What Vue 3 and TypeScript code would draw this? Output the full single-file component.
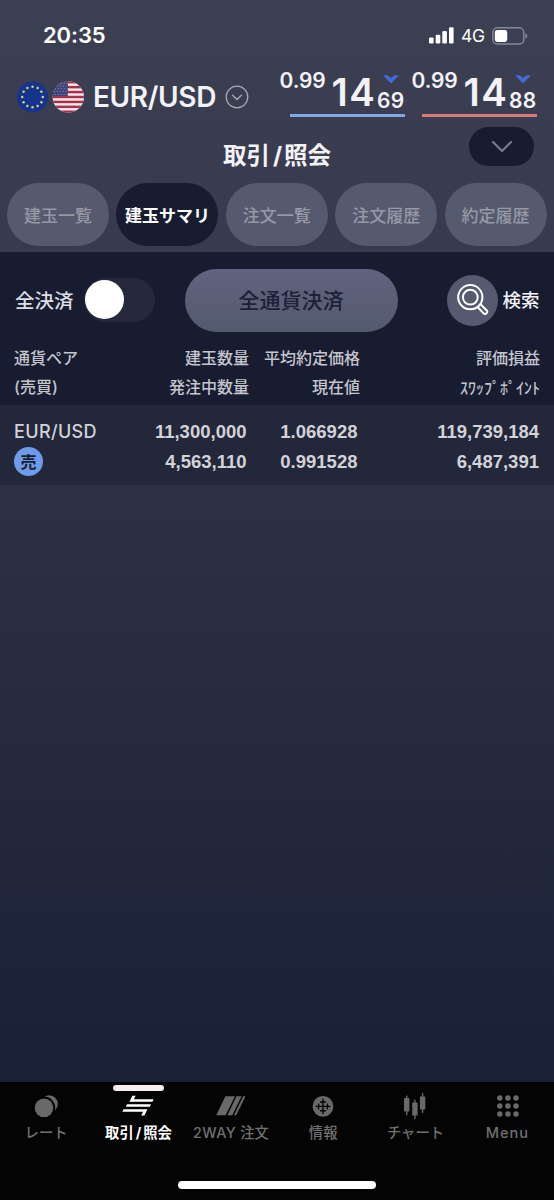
<script setup lang="ts">
interface Price { head: string; main: string; tail: string; side: 'bid' | 'ask' }

const prices: Price[] = [
  { head: '0.99', main: '14', tail: '69', side: 'bid' },
  { head: '0.99', main: '14', tail: '88', side: 'ask' },
]
const tabs: string[] = ['建玉一覧', '建玉サマリ', '注文一覧', '注文履歴', '約定履歴']
const activeTab = 1
const nav: { id: string; label: string }[] = [
  { id: 'rate', label: 'レート' },
  { id: 'trade', label: '取引/照会' },
  { id: 'twoway', label: '2WAY注文' },
  { id: 'info', label: '情報' },
  { id: 'chart', label: 'チャート' },
  { id: 'menu', label: 'Menu' },
]
const stars = Array.from({ length: 12 }, (_, i) => ({
  x: 16 + 10.3 * Math.sin((i * Math.PI) / 6),
  y: 16 - 10.3 * Math.cos((i * Math.PI) / 6),
}))
const steps = [0, 1, 2]
</script>

<template>
  <div class="screen">
    <header class="top">
      <div class="status">
        <span class="time">20:35</span>
        <div class="status-right">
          <svg class="signal" width="25" height="17" viewBox="0 0 25 17" fill="#fff">
            <rect x="0" y="10.5" width="4.6" height="6" rx="1.2" />
            <rect x="6.7" y="7.7" width="4.6" height="8.8" rx="1.2" />
            <rect x="13.3" y="4" width="4.6" height="12.5" rx="1.2" />
            <rect x="20" y="0.3" width="4.6" height="16.2" rx="1.2" />
          </svg>
          <span class="net">4G</span>
          <svg class="battery" width="36" height="18" viewBox="0 0 36 18">
            <rect x="0.8" y="0.8" width="31" height="16.2" rx="4.6" fill="none" stroke="#85899a" stroke-width="1.4" />
            <rect x="2.8" y="2.9" width="12.4" height="12" rx="2.4" fill="#fff" />
            <path d="M33.4 6.2 Q35.4 7.2 35.4 8.9 Q35.4 10.6 33.4 11.6 Z" fill="#85899a" />
          </svg>
        </div>
      </div>

      <div class="pair-row">
        <svg class="flag" width="32" height="32" viewBox="0 0 32 32">
          <circle cx="16.5" cy="16" r="15.6" fill="#15348c" />
          <circle v-for="(s, i) in stars" :key="i" :cx="s.x + 0.5" :cy="s.y" r="1.25" fill="#d9cf86" />
        </svg>
        <svg class="flag us" width="32" height="32" viewBox="0 0 32 32">
          <defs><clipPath id="usClip"><circle cx="16.3" cy="16" r="15.7" /></clipPath></defs>
          <g clip-path="url(#usClip)">
            <rect width="33" height="32" fill="#f0e9ee" />
            <rect v-for="n in 7" :key="n" x="0" :y="(n - 1) * 4.92" width="33" height="2.46" fill="#ad2f47" />
            <rect width="16" height="15" fill="#3e4379" />
            <g fill="#b4b5cf">
              <template v-for="r in 5" :key="r">
                <circle v-for="c in 5" :key="c" :cx="c * 3 - 0.8 + (r % 2)" :cy="r * 2.8 - 0.6" r="0.5" />
              </template>
            </g>
          </g>
        </svg>
        <span class="pair">EUR/USD</span>
        <svg class="pick" width="24" height="24" viewBox="0 0 24 24" fill="none" stroke="#a6a8b5">
          <circle cx="12" cy="12" r="10.8" stroke-width="1.3" />
          <path d="M7.6 10.2 L12 14.4 L16.4 10.2" stroke-width="1.4" stroke-linecap="round" stroke-linejoin="round" />
        </svg>
        <div class="prices">
          <div v-for="p in prices" :key="p.side" class="price" :class="p.side">
            <span class="p-head">{{ p.head }}</span>
            <span class="p-main">{{ p.main }}</span>
            <span class="p-end">
              <svg width="16" height="9" viewBox="0 0 16 9"><path d="M0 0.3 H4.6 L8 3 L11.4 0.3 H16 L8 8.6 Z" fill="#416bd5" /></svg>
              <span class="p-tail">{{ p.tail }}</span>
            </span>
          </div>
        </div>
      </div>

      <div class="title-row">
        <h1>取引<i>/</i>照会</h1>
        <button class="fold">
          <svg width="22" height="14" viewBox="0 0 22 14"><path d="M2 2 L11 11 L20 2" fill="none" stroke="#777b8f" stroke-width="2.2" stroke-linecap="round" stroke-linejoin="round" /></svg>
        </button>
      </div>

      <nav class="tabs">
        <button v-for="(t, i) in tabs" :key="t" :class="{ on: i === activeTab }">{{ t }}</button>
      </nav>
    </header>

    <section class="panel">
      <div class="tools">
        <span class="all">全決済</span>
        <span class="switch"><span class="knob"></span></span>
        <button class="close-all"><span>全通貨決済</span></button>
        <span class="search">
          <svg width="32" height="32" viewBox="0 0 32 32" fill="none" stroke="#fff" stroke-width="2" stroke-linejoin="round">
            <circle cx="13.3" cy="13.2" r="12.1" />
            <circle cx="13.3" cy="13.2" r="7.4" />
            <path d="M20.8 23.2 L26.6 29.4 Q28.2 30.6 29.6 29.2 Q31 27.7 29.6 26.2 L23.5 20.2" stroke-linecap="round" />
          </svg>
        </span>
        <span class="search-label">検索</span>
      </div>
      <div class="cols head">
        <div>通貨ペア<br>(売買)</div>
        <div>建玉数量<br>発注中数量</div>
        <div>平均約定価格<br>現在値</div>
        <div>評価損益<br><span class="kana">ｽﾜｯﾌﾟﾎﾟｲﾝﾄ</span></div>
      </div>
    </section>

    <section class="cols row">
      <div><span class="sym">EUR/USD</span><span class="sell">売</span></div>
      <div>11,300,000<br>4,563,110</div>
      <div>1.066928<br>0.991528</div>
      <div>119,739,184<br>6,487,391</div>
    </section>

    <main class="empty"></main>

    <footer class="bar">
      <div class="items">
        <div v-for="n in nav" :key="n.id" class="item" :class="{ on: n.id === 'trade' }">
          <svg v-if="n.id === 'rate'" width="32" height="28" viewBox="0 0 32 28">
            <circle cx="19" cy="10" r="8.8" fill="#696969" />
            <circle cx="14" cy="13.8" r="11.2" fill="#040404" />
            <circle cx="14" cy="13.8" r="9.3" fill="#696969" />
          </svg>
          <svg v-else-if="n.id === 'trade'" width="32" height="28" viewBox="0 0 32 28" fill="#fff">
            <path d="M10.4 1.8 H13.6 L11.9 5.3 H31.6 L30.4 7.8 H7.4 Z" />
            <path d="M5 10.3 H29 L27.9 12.7 H3.8 Z" />
            <path d="M1.5 15.2 H25.4 L22.4 21.6 H19.2 L21.1 17.7 H0.4 Z" />
          </svg>
          <svg v-else-if="n.id === 'twoway'" width="32" height="28" viewBox="0 0 32 28" fill="#696969">
            <path d="M10.4 2.3 H20 L10.6 21.3 H1.2 Z" />
            <path d="M21.5 2.3 H26.6 L17.3 21.3 H12.4 Z" />
            <path d="M28.2 2.3 H30.5 L21.2 21.3 H19 Z" />
          </svg>
          <svg v-else-if="n.id === 'info'" width="32" height="28" viewBox="0 0 32 28">
            <circle cx="16" cy="12.4" r="10.4" fill="#696969" />
            <path d="M16 4.8 V20 M8.4 12.4 H23.6 M13 8 H19 M13 16.8 H19 M11.6 9.4 V15.4 M20.4 9.4 V15.4" fill="none" stroke="#080808" stroke-width="1.4" />
          </svg>
          <svg v-else-if="n.id === 'chart'" width="32" height="28" viewBox="0 0 32 28" fill="#696969">
            <rect x="5" y="4" width="5.4" height="13.4" rx="0.7" /><rect x="7" y="1.6" width="1.4" height="19.6" />
            <rect x="13.2" y="8.6" width="5.4" height="13" rx="0.7" /><rect x="15.2" y="5.8" width="1.4" height="19.2" />
            <rect x="20.9" y="2.5" width="5.4" height="13" rx="0.7" /><rect x="22.9" y="-1" width="1.4" height="20" />
          </svg>
          <svg v-else width="32" height="28" viewBox="0 0 32 28" fill="#696969">
            <template v-for="r in steps" :key="r">
              <circle v-for="c in steps" :key="c" :cx="7.8 + c * 8.1" :cy="3.9 + r * 8.1" r="2.75" />
            </template>
          </svg>
          <span v-if="n.id === 'trade'" class="label">取引<i>/</i>照会</span>
          <span v-else-if="n.id === 'twoway'" class="label"><b>2WAY</b>注文</span>
          <span v-else class="label" :class="n.id">{{ n.label }}</span>
        </div>
      </div>
      <div class="home"></div>
    </footer>
  </div>
</template>

<style>
body { margin: 0; background: #040404; }
</style>

<style scoped>
* { box-sizing: border-box; }
.screen {
  width: 554px; height: 1200px; display: flex; flex-direction: column; overflow: hidden;
  font-family: Inter, "Noto Sans CJK JP", sans-serif; color: #f2f2f7; white-space: nowrap;
  background: linear-gradient(#3c4053 0, #393d4f 130px, #373b4d 252px, #2d3144 490px, #1a2036 1081px);
}
button { border: 0; padding: 0; margin: 0; font: inherit; color: inherit; display: flex; align-items: center; justify-content: center; }
i { font-style: normal; }
svg { display: block; flex: none; overflow: visible; }
.top { height: 252px; flex: none; }
.status { height: 70px; padding: 22px 26px 0 43px; display: flex; justify-content: space-between; }
.time { font-size: 22px; line-height: 27px; font-weight: 600; letter-spacing: -0.1px; color: #fff; }
.status-right { display: flex; height: 27px; align-items: center; }
.signal { margin-top: -1px; }
.net { font-size: 17.5px; font-weight: 400; margin: 0 7px; width: 24px; letter-spacing: -0.2px; color: #fff; }
.pair-row { height: 54px; display: flex; align-items: center; padding-left: 16px; }
.us { margin-left: 4px; }
.pair { font-size: 28px; font-weight: 600; width: 122px; margin-left: 9px; letter-spacing: -0.35px; }
.pick { margin-left: 10px; }
.prices { display: flex; gap: 17px; margin-left: 41px; height: 54px; }
.price { width: 115px; height: 47px; border-bottom: 3px solid #82a8e6; display: flex; align-items: flex-start; }
.price.ask { border-color: #d77c7b; }
.p-head { margin-left: -10.5px; width: 52px; font-size: 21px; line-height: 22px; font-weight: 600; letter-spacing: -0.1px; }
.p-main { width: 45.5px; font-size: 38.5px; line-height: 44px; font-weight: 600; letter-spacing: 1.4px; }
.p-end { display: flex; flex-direction: column; padding-top: 5px; align-items: center; }
.p-tail { font-size: 21px; line-height: 22px; margin-top: 6px; font-weight: 600; letter-spacing: 0.3px; }
.title-row { height: 59px; display: grid; grid-template-columns: 1fr auto 1fr; padding-top: 3px; }
h1 { grid-column: 2; margin: 0; font-size: 23.5px; line-height: 58px; height: 56px; font-weight: 700; }
h1 i { margin: 0 2px 0 3px; }
.fold { width: 65px; height: 39px; border-radius: 20px; background: #171c31; justify-self: end; margin-right: 20px; }
.tabs { display: flex; gap: 7.4px; padding-left: 7px; }
.tabs button { width: 102px; height: 63px; border-radius: 31.5px; background: #565a6f; color: #9698a6; font-size: 17px; font-weight: 500; padding-bottom: 1px; }
.tabs .on { background: #171c31; color: #fff; font-weight: 700; }
.panel { height: 153px; flex: none; background: #171c31; }
.tools { height: 92px; display: flex; align-items: center; padding: 4px 0 0 15px; }
.all { width: 69px; font-size: 19.5px; font-weight: 500; color: #dcdce3; padding-bottom: 2px; }
.switch { width: 71px; height: 44px; border-radius: 22px; background: #25293b; padding: 2.5px 0 0 1px; margin-top: -1px; }
.knob { display: block; width: 39px; height: 39px; border-radius: 50%; background: #fff; }
.close-all { width: 213px; height: 63px; border-radius: 31.5px; margin-left: 29.5px; background: linear-gradient(#62637f, #535a6e); color: #1c2139; font-size: 21px; font-weight: 500; padding-bottom: 2px; }
.search { margin-left: 49.5px; width: 51px; height: 51px; border-radius: 50%; background: #555a70; display: grid; place-items: center; }
.search-label { margin-left: 4.5px; font-size: 18.5px; font-weight: 500; padding-bottom: 2px; }
.cols { display: grid; grid-template-columns: 120px 129px 111px 180px; text-align: right; }
.cols > div:first-child { text-align: left; padding-left: 14px; }
.head { font-size: 16px; line-height: 28.5px; font-weight: 500; color: #c4c5cd; }
.kana { font-family: "Noto Sans CJK JP", sans-serif; }
.row { height: 80px; flex: none; background: #22273a; padding-top: 12px; font-family: "Liberation Sans", sans-serif; font-size: 18.5px; font-weight: 700; line-height: 30px; color: #d2d2d8; }
.row > div { padding-right: 2.5px; }
.row > div:last-child { padding-right: 1px; }
.sym { display: block; font-family: Inter, sans-serif; font-size: 18px; font-weight: 500; height: 30px; letter-spacing: 0.35px; }
.sell { display: flex; align-items: center; justify-content: center; width: 29px; height: 29px; border-radius: 50%; background: #6d9bea; color: #171c31; font-family: "Noto Sans CJK JP", sans-serif; font-size: 16px; line-height: 29px; font-weight: 700; }
.empty { flex: 1; }
.bar { height: 118px; flex: none; background: #040404; display: flex; flex-direction: column; align-items: center; }
.items { width: 554px; height: 100px; display: grid; grid-template-columns: repeat(6, 1fr); }
.item { padding-top: 12px; display: flex; flex-direction: column; align-items: center; color: #707070; position: relative; }
.item.on { color: #fff; }
.item.on::before { content: ""; position: absolute; top: 2.5px; width: 51px; height: 6px; border-radius: 3px; background: #f5eff4; }
.label { font-size: 14.3px; line-height: 20px; margin-top: 1px; font-weight: 500; }
.on .label { font-weight: 700; }
.label i { margin: 0 2px; }
.label b { font-weight: 500; letter-spacing: 0.5px; margin-right: 4px; }
.label.menu { letter-spacing: 0.9px; font-size: 14.6px; margin-left: -1px; }
.home { width: 198px; height: 8px; border-radius: 4px; background: #fff; margin-top: -1px; }
</style>
